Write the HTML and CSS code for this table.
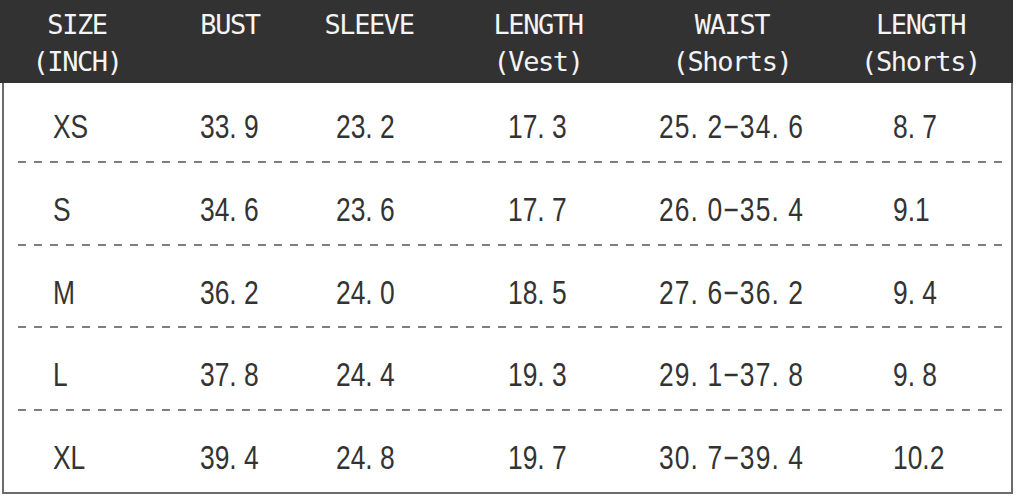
FILE: index.html
```html
<!DOCTYPE html>
<html>
<head>
<meta charset="utf-8">
<link rel="stylesheet" href="styles.css">
</head>
<body>
<div class="chart">
  <div class="head">
    <div class="hcell"><span>SIZE</span><span>(INCH)</span></div>
    <div class="hcell"><span>BUST</span><span>&nbsp;</span></div>
    <div class="hcell"><span>SLEEVE</span><span>&nbsp;</span></div>
    <div class="hcell"><span>LENGTH</span><span>(Vest)</span></div>
    <div class="hcell"><span>WAIST</span><span>(Shorts)</span></div>
    <div class="hcell last"><span>LENGTH</span><span>(Shorts)</span></div>
  </div>
  <div class="body">
    <div class="row first">
      <div class="c"><span>XS</span></div><div class="c"><span>33. 9</span></div><div class="c"><span>23. 2</span></div><div class="c"><span>17. 3</span></div><div class="c range"><span>25. 2−34. 6</span></div><div class="c"><span>8. 7</span></div>
    </div>
    <div class="sep"></div>
    <div class="row">
      <div class="c"><span>S</span></div><div class="c"><span>34. 6</span></div><div class="c"><span>23. 6</span></div><div class="c"><span>17. 7</span></div><div class="c range"><span>26. 0−35. 4</span></div><div class="c"><span>9.1</span></div>
    </div>
    <div class="sep"></div>
    <div class="row">
      <div class="c"><span>M</span></div><div class="c"><span>36. 2</span></div><div class="c"><span>24. 0</span></div><div class="c"><span>18. 5</span></div><div class="c range"><span>27. 6−36. 2</span></div><div class="c"><span>9. 4</span></div>
    </div>
    <div class="sep"></div>
    <div class="row">
      <div class="c"><span>L</span></div><div class="c"><span>37. 8</span></div><div class="c"><span>24. 4</span></div><div class="c"><span>19. 3</span></div><div class="c range"><span>29. 1−37. 8</span></div><div class="c"><span>9. 8</span></div>
    </div>
    <div class="sep"></div>
    <div class="row">
      <div class="c"><span>XL</span></div><div class="c"><span>39. 4</span></div><div class="c"><span>24. 8</span></div><div class="c"><span>19. 7</span></div><div class="c range"><span>30. 7−39. 4</span></div><div class="c"><span>10.2</span></div>
    </div>
  </div>
</div>
</body>
</html>
```
FILE: styles.css
```css
html, body {
  margin: 0;
  padding: 0;
  background: #ffffff;
}

.chart {
  width: 1013px;
}

.head {
  height: 83px;
  background: #323232;
  color: #f4f4f4;
  display: grid;
  grid-template-columns: 154px 152px 126px 212px 176px 1fr;
  align-items: center;
  font-family: "DejaVu Sans Mono", "Liberation Mono", monospace;
  font-size: 27px;
  letter-spacing: -1.4px;
}

.hcell {
  display: flex;
  flex-direction: column;
  align-items: center;
  line-height: 37px;
  padding-top: 2px;
}

.hcell.last {
  padding-left: 8px;
}

.body {
  margin-left: 2px;
  border: 2px solid #6b6b6b;
  border-top: none;
  height: 411px;
  box-sizing: border-box;
  display: flex;
  flex-direction: column;
  color: #333333;
  font-family: "Liberation Sans", Arial, sans-serif;
  font-size: 33px;
}

.row {
  display: grid;
  grid-template-columns: 147px 136px 172px 151px 234px 1fr;
  padding-left: 49px;
  height: 82px;
  padding-top: 13px;
  box-sizing: border-box;
  align-items: center;
}

.row.first {
  height: 79px;
  padding-top: 10px;
}

.c {
  white-space: nowrap;
}

.c span {
  display: inline-block;
  transform: scaleX(0.8);
  transform-origin: left center;
}

.c.range span {
  letter-spacing: 1.4px;
}

.sep {
  height: 2px;
  margin: 0 6px 0 14px;
  background-image: repeating-linear-gradient(to right, #7e7e7e 0 8px, transparent 8px 16px);
}
```
